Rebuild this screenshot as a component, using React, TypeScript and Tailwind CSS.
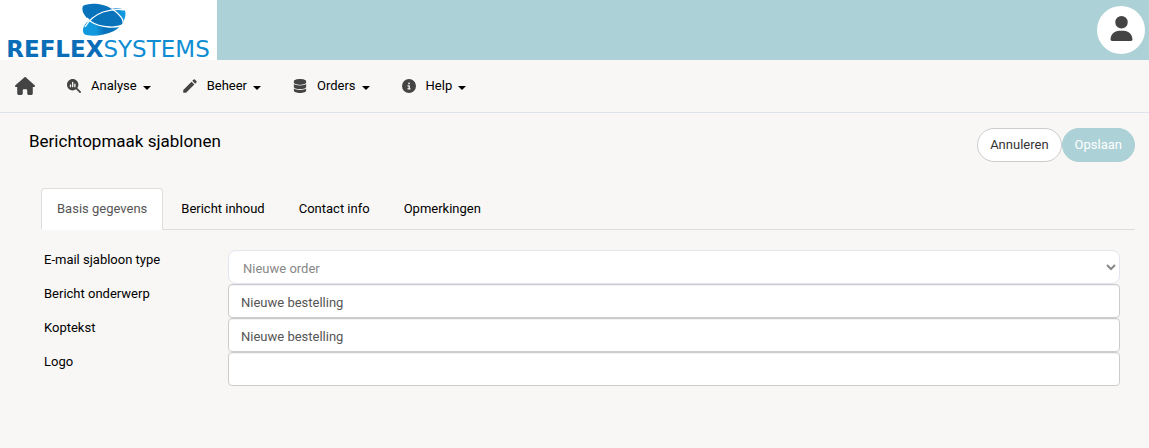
import { useState } from 'react';
import {
  FaCircleInfo,
  FaDatabase,
  FaHouse,
  FaMagnifyingGlassChart,
  FaUser,
} from 'react-icons/fa6';
import { MdEdit } from 'react-icons/md';

const menuItems = [
  { label: 'Analyse', icon: FaMagnifyingGlassChart, size: 14 },
  { label: 'Beheer', icon: MdEdit, size: 18 },
  { label: 'Orders', icon: FaDatabase, size: 14 },
  { label: 'Help', icon: FaCircleInfo, size: 14 },
];

const tabs = ['Basis gegevens', 'Bericht inhoud', 'Contact info', 'Opmerkingen'];

function Logo() {
  return (
    <a
      href="#"
      aria-label="Reflex Systems"
      className="flex w-[217px] flex-col items-center bg-white pt-[3px] pr-px"
    >
      <svg width="54" height="34" viewBox="0 0 54 34" className="shrink-0" aria-hidden="true">
        <defs>
          <linearGradient id="wing" x1="0" x2="1" y1="0" y2="0">
            <stop offset="0.3" stopColor="#1199df" />
            <stop offset="0.5" stopColor="#0873bb" />
            <stop offset="0.7" stopColor="#0873bb" />
            <stop offset="0.9" stopColor="#1199df" />
          </linearGradient>
        </defs>
        <path
          d="M3 31C0 26 4 20 9 17C14 12 22 8 30 6C38 4 43 6 44 8C46 13 42 23 33 28C23 33 8 34 3 31Z"
          fill="url(#wing)"
        />
        <path
          d="M2 3C6 0 21 -1 31 6C39 11 44 18 42 21C39 25 20 26 9 18C3 13 0 7 2 3Z"
          fill="#0873bb"
        />
        <g fill="none" stroke="#ffffff" strokeWidth="1.3">
          <path d="M31 6C39 11 43 17 42 21C39 25 20 26 9 18L6 15" />
          <path d="M4 24C8 17 14 12 22 9C32 6 38 6 43 7" />
        </g>
      </svg>
      <span className="font-['DejaVu_Sans',sans-serif] text-[23px] leading-[24px] text-[#0f8dd3]">
        <b className="text-[#0a6db7]">REFLEX</b>SYSTEMS
      </span>
    </a>
  );
}

function MainMenu() {
  return (
    <nav className="flex h-[53px] items-center border-b border-[#dfe3ee] pl-[15px]">
      <a href="#" aria-label="Home" className="mr-4 text-[#444444]">
        <FaHouse size={20} />
      </a>
      {menuItems.map(({ label, icon: Icon, size }) => (
        <button key={label} type="button" className="flex items-center px-4 leading-5">
          <span className="mr-[10px] flex w-[14px] justify-center text-[#444444]">
            <Icon size={size} className="shrink-0" />
          </span>
          {label}
          <span className="mt-1 ml-[6px] border-x-4 border-t-4 border-x-transparent border-t-black" />
        </button>
      ))}
    </nav>
  );
}

export default function App() {
  const [activeTab, setActiveTab] = useState(tabs[0]);
  const [subject, setSubject] = useState('Nieuwe bestelling');
  const [heading, setHeading] = useState('Nieuwe bestelling');
  const [logo, setLogo] = useState('');

  const fields = [
    { id: 'subject', label: 'Bericht onderwerp', value: subject, onChange: setSubject },
    { id: 'heading', label: 'Koptekst', value: heading, onChange: setHeading },
    { id: 'logo', label: 'Logo', value: logo, onChange: setLogo },
  ];

  return (
    <div className="min-h-screen bg-[#f8f7f5] font-[Roboto,sans-serif] text-[13px] text-black">
      <header className="flex h-[60px] justify-between bg-[#acd1d6]">
        <Logo />
        <button
          type="button"
          aria-label="Profiel"
          className="mt-[6px] mr-1 flex size-12 items-center justify-center rounded-full bg-white pb-1 text-[#444444]"
        >
          <FaUser size={25} />
        </button>
      </header>

      <MainMenu />

      <main className="pt-[15px] pr-[14px] pl-[29px]">
        <div className="flex items-start justify-between">
          <h1 className="text-[17px] leading-[26px]">Berichtopmaak sjablonen</h1>
          <div className="flex">
            <button
              type="button"
              className="h-[34px] rounded-full border border-[#cccccc] bg-white px-3 text-[#333333]"
            >
              Annuleren
            </button>
            <button
              type="button"
              className="h-[34px] rounded-full border border-[#acd1d6] bg-[#acd1d6] px-3 text-white"
            >
              Opslaan
            </button>
          </div>
        </div>

        <div role="tablist" className="mt-[26px] ml-3 flex border-b border-[#dddddd]">
          {tabs.map((tab) => (
            <button
              key={tab}
              type="button"
              role="tab"
              aria-selected={tab === activeTab}
              onClick={() => setActiveTab(tab)}
              className={
                tab === activeTab
                  ? '-mb-px mr-[2px] h-[42px] rounded-t border border-[#dddddd] border-b-white bg-white px-[15px] text-[#555555]'
                  : '-mb-px mr-[2px] h-[42px] border border-transparent px-[15px]'
              }
            >
              {tab}
            </button>
          ))}
        </div>

        <form className="mt-5 pr-[15px] pl-[15px]">
          <div className="flex">
            <label htmlFor="type" className="w-[184px] shrink-0 leading-5">
              E-mail sjabloon type
            </label>
            <select
              id="type"
              disabled
              className="h-[34px] min-w-0 flex-1 rounded-lg border border-[#e2e5ee] bg-white px-[10px] pt-[2px] opacity-100 disabled:text-[#888888]"
            >
              <option>Nieuwe order</option>
            </select>
          </div>
          {fields.map((field) => (
            <div key={field.id} className="flex">
              <label htmlFor={field.id} className="w-[184px] shrink-0 leading-5">
                {field.label}
              </label>
              <input
                id={field.id}
                type="text"
                value={field.value}
                onChange={(e) => field.onChange(e.target.value)}
                className="h-[34px] min-w-0 flex-1 rounded border border-[#cccccc] bg-white px-3 pt-[2px] text-[#555555] inset-shadow-2xs"
              />
            </div>
          ))}
        </form>
      </main>
    </div>
  );
}
